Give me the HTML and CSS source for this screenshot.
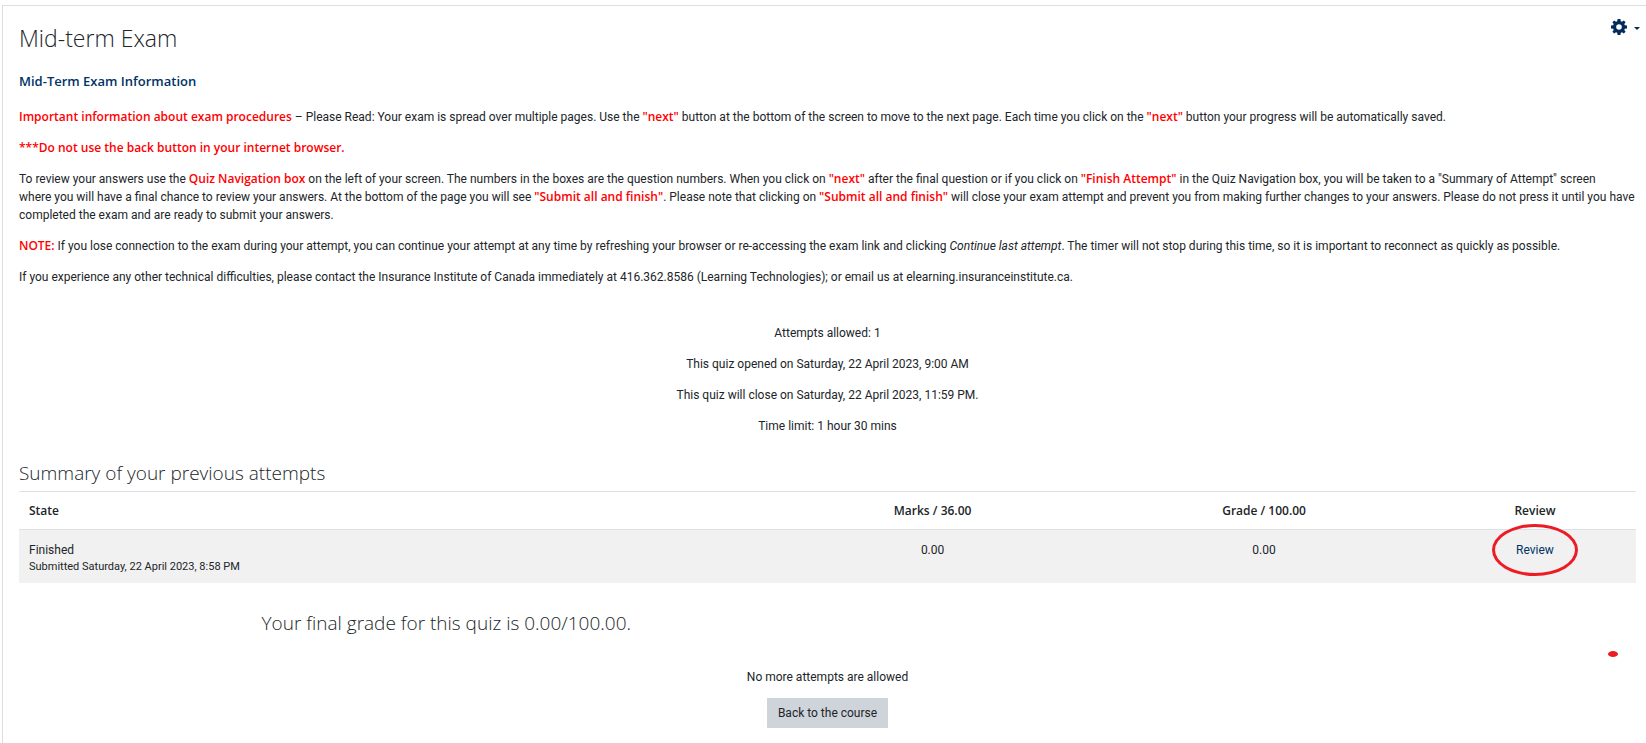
FILE: index.html
```html
<!DOCTYPE html>
<html lang="en">
<head>
    <meta charset="UTF-8">
    <meta name="viewport" content="width=device-width, initial-scale=1.0">
    <title>Mid-term Exam</title>
    <link rel="stylesheet" href="styles.css">
</head>
<body>
    <main class="card">
        <header class="page-header">
            <h1>Mid-term Exam</h1>
            <button class="settings" type="button" aria-label="Actions menu">
                <svg class="gear" viewBox="0 0 16 16" aria-hidden="true">
                    <path fill-rule="evenodd" d="M6.6 0h2.8l.4 2.2 1.2.5L12.8 1.400 14.600 3.200 13.300 5l.5 1.200 2.200.4v2.800l-2.200.4-.5 1.200 1.300 1.800-1.800 1.800L11 13.300l-1.200.5L9.400 16H6.600l-.4-2.200L5 13.300l-1.800 1.300-1.800-1.800L2.700 11l-.5-1.200L0 9.400V6.600l2.200-.4.5-1.200-1.300-1.800 1.800-1.800L5 2.700l1.200-.5zM8 5.200a2.800 2.800 0 1 0 0 5.600 2.800 2.800 0 0 0 0-5.600z"/>
                </svg>
                <span class="caret"></span>
            </button>
        </header>

        <!-- Exam information -->
        <section class="intro">
            <h2>Mid-Term Exam Information</h2>
            <p><strong>Important information about exam procedures</strong> – Please Read: Your exam is spread over multiple pages. Use the <strong>"next"</strong> button at the bottom of the screen to move to the next page. Each time you click on the <strong>"next"</strong> button your progress will be automatically saved.</p>
            <p><strong>***Do not use the back button in your internet browser.</strong></p>
            <p>To review your answers use the <strong>Quiz Navigation box</strong> on the left of your screen. The numbers in the boxes are the question numbers. When you click on <strong>"next"</strong> after the final question or if you click on <strong>"Finish Attempt"</strong> in the Quiz Navigation box, you will be taken to a "Summary of Attempt" screen<br>
            where you will have a final chance to review your answers. At the bottom of the page you will see <strong>"Submit all and finish"</strong>. Please note that clicking on <strong>"Submit all and finish"</strong> will close your exam attempt and prevent you from making further changes to your answers. Please do not press it until you have completed the exam and are ready to submit your answers.</p>
            <p><strong>NOTE:</strong> If you lose connection to the exam during your attempt, you can continue your attempt at any time by refreshing your browser or re-accessing the exam link and clicking <em>Continue last attempt</em>. The timer will not stop during this time, so it is important to reconnect as quickly as possible.</p>
            <p>If you experience any other technical difficulties, please contact the Insurance Institute of Canada immediately at 416.362.8586 (Learning Technologies); or email us at elearning.insuranceinstitute.ca.</p>
        </section>

        <section class="quiz-info">
            <p>Attempts allowed: 1</p>
            <p>This quiz opened on Saturday, 22 April 2023, 9:00 AM</p>
            <p>This quiz will close on Saturday, 22 April 2023, 11:59 PM.</p>
            <p>Time limit: 1 hour 30 mins</p>
        </section>

        <!-- Previous attempts -->
        <h3>Summary of your previous attempts</h3>
        <table class="attempts">
            <thead>
                <tr>
                    <th class="col-state" scope="col">State</th>
                    <th class="col-marks" scope="col">Marks / 36.00</th>
                    <th class="col-grade" scope="col">Grade / 100.00</th>
                    <th class="col-review" scope="col">Review</th>
                </tr>
            </thead>
            <tbody>
                <tr>
                    <td class="col-state">Finished<span class="state-details">Submitted Saturday, 22 April 2023, 8:58 PM</span></td>
                    <td>0.00</td>
                    <td>0.00</td>
                    <td><span class="marked"><a href="#">Review</a></span></td>
                </tr>
            </tbody>
        </table>

        <section class="feedback">
            <h3>Your final grade for this quiz is 0.00/100.00.</h3>
            <span class="dot"></span>
        </section>

        <footer class="quiz-attempt">
            <p>No more attempts are allowed</p>
            <button class="btn" type="button">Back to the course</button>
        </footer>
    </main>
</body>
</html>
```
FILE: styles.css
```css
*, *::after {
    box-sizing: border-box;
}
body {
    margin: 5px 0 0 2px;
    background-color: white;
    color: #212529;
    font-family: Roboto, "Open Sans", sans-serif;
    font-size: 12px;
    line-height: 18px;
}
.card {
    min-height: calc(100vh - 5px);
    padding: 16px 10px 16px 16px;
    border-top: 1px solid #dedede;
    border-left: 1px solid #dedede;
}
h1, h2, h3, p {
    margin: 0;
}
h1, h3 {
    font-family: "Open Sans", sans-serif;
    font-weight: 300;
}
h1 {
    font-size: 23px;
    line-height: 32px;
}
h2 {
    color: #003366;
    font-family: "Open Sans", sans-serif;
    font-size: 13px;
    font-weight: 600;
    line-height: 18px;
    margin-bottom: 18px;
}
h3 {
    font-size: 19px;
    line-height: 28px;
}
strong, th {
    font-family: "Open Sans", sans-serif;
    font-weight: 600;
}
.page-header {
    display: flex;
    justify-content: space-between;
    align-items: flex-start;
    margin-bottom: 18px;
}
.settings {
    display: flex;
    align-items: center;
    gap: 7px;
    margin-right: -4px;
    padding: 0;
    border: 0;
    background: none;
    cursor: pointer;
}
.gear {
    width: 16px;
    height: 16px;
    margin-top: -3px;
    fill: #002b5c;
}
.caret {
    border-top: 3px solid #002b5c;
    border-left: 3px solid transparent;
    border-right: 3px solid transparent;
}
.intro p + p,
.quiz-info p + p {
    margin-top: 13px;
}
.intro strong {
    color: red;
}
.quiz-info {
    margin: 38px 0 24px;
    text-align: center;
}
.attempts {
    width: 100%;
    margin-top: 4px;
    border-collapse: collapse;
    table-layout: fixed;
}
.attempts th,
.attempts td {
    padding: 11px 10px 9px;
    border-top: 1px solid #dee2e6;
    text-align: center;
    vertical-align: top;
}
.attempts th {
    padding: 10px 10px 9px;
}
.attempts td {
    background-color: #f1f1f1;
}
.attempts .col-state {
    width: 46.5%;
    text-align: left;
}
.col-marks {
    width: 20%;
}
.col-grade {
    width: 21%;
}
.col-review {
    width: 12.5%;
}
.state-details {
    display: block;
    font-size: 11px;
    line-height: 15px;
}
a {
    color: #003366;
    text-decoration: none;
}
.marked {
    position: relative;
}
/* hand-drawn ring around the review link */
.marked::after {
    content: "";
    position: absolute;
    top: 50%;
    left: 50%;
    width: 86px;
    height: 52px;
    border: 3px solid #ed1c24;
    border-radius: 50%;
    transform: translate(-50%, -50%);
    pointer-events: none;
}
.feedback {
    position: relative;
    margin: 26px 0 31px;
    padding-left: 15%;
}
.dot {
    position: absolute;
    right: 18px;
    bottom: -20px;
    width: 10px;
    height: 6px;
    border-radius: 50%;
    background-color: #ed1c24;
}
.quiz-attempt {
    text-align: center;
}
.btn {
    margin-top: 12px;
    padding: 6px 11px;
    border: 0;
    background-color: #ced4da;
    color: #212529;
    font: inherit;
    cursor: pointer;
}
```
